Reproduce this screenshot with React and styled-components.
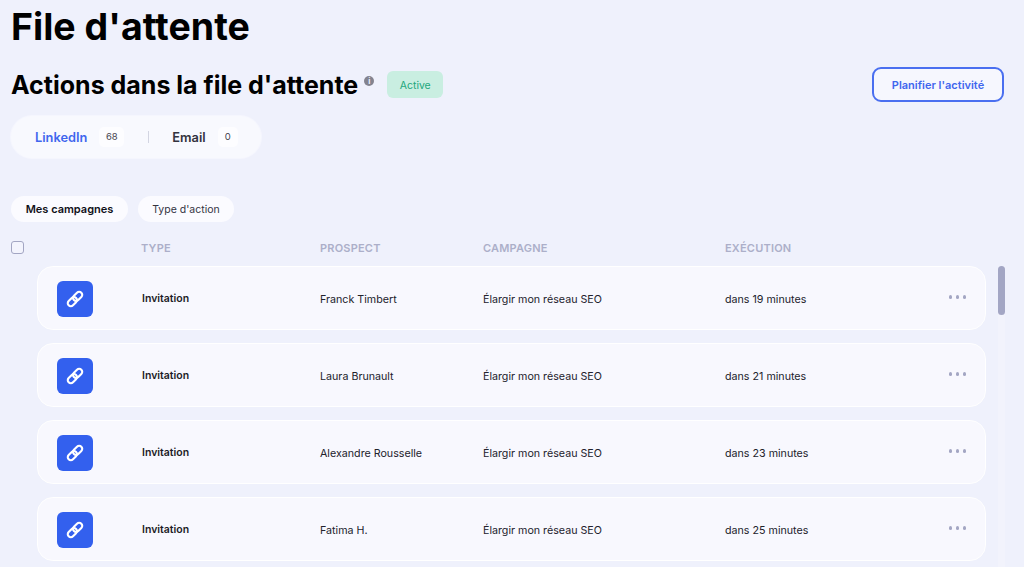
import React from "react";
import styled, { createGlobalStyle } from "styled-components";

const Global = createGlobalStyle`
  html, body { margin: 0; padding: 0; height: 100%; overflow: hidden; background: #eff1fc; }
  body { font-family: Inter, "Liberation Sans", sans-serif; color: #17171f; }
  * { box-sizing: border-box; }
`;

const Page = styled.div`
  width: 1024px;
  height: 567px;
  overflow: hidden;
  padding: 0 20px 0 11px;
  display: flex;
  flex-direction: column;
  & > * { flex: none; }
`;
const Title = styled.h1`
  margin: 0;
  height: 54px;
  font-size: 37.5px;
  line-height: 54px;
  font-weight: 700;
  color: #000;
`;
const HeadRow = styled.div`
  display: flex;
  align-items: flex-start;
  height: 61px;
  padding-top: 13px;
`;
const Heading = styled.h2`
  margin: 0;
  font-size: 25px;
  line-height: 36px;
  font-weight: 700;
  color: #000;
`;
const InfoDot = styled.span`
  width: 10px;
  height: 10px;
  margin: 9px 0 0 6px;
  border-radius: 50%;
  background: #83838f;
  color: #eff1fc;
  font-size: 8px;
  line-height: 10px;
  font-weight: 700;
  text-align: center;
`;
const Badge = styled.span`
  width: 56px;
  height: 27px;
  margin: 4px 0 0 13px;
  padding-top: 1px;
  border-radius: 6px;
  background: #c9eee1;
  color: #22a77c;
  font-size: 10.5px;
  line-height: 27px;
  text-align: center;
`;
const PlanButton = styled.button`
  width: 132px;
  height: 35px;
  margin-left: auto;
  padding: 0;
  border: 2px solid #4a6ff0;
  border-radius: 9px;
  background: #f6f7fe;
  color: #3f66ee;
  font-family: inherit;
  font-size: 11px;
  font-weight: 600;
`;
const Tabs = styled.div`
  width: 250px;
  height: 42px;
  margin-top: 1px;
  padding-left: 24px;
  display: flex;
  align-items: center;
  border-radius: 21px;
  background: #f8f9fe;
  box-shadow: 0 0 0 1px #f5f6fe;
`;
const TabLabel = styled.span`
  font-size: 12.8px;
  font-weight: 600;
  color: ${(p) => (p.$active ? "#3f66ee" : "#33333f")};
`;
const Count = styled.span`
  min-width: ${(p) => p.$w}px;
  height: 20px;
  margin-left: 12px;
  border-radius: 5px;
  background: #fdfdff;
  color: #44444f;
  font-size: 9.5px;
  line-height: 20px;
  text-align: center;
`;
const TabSep = styled.span`
  width: 1px;
  height: 12px;
  margin: 0 23px 0 24px;
  background: #d3d5e2;
`;
const Filters = styled.div`
  display: flex;
  gap: 10px;
  margin-top: 38px;
`;
const Filter = styled.button`
  width: ${(p) => p.$w}px;
  height: 26px;
  padding: 0;
  border: 0;
  border-radius: 13px;
  background: #fbfbff;
  color: ${(p) => (p.$strong ? "#101018" : "#33333f")};
  font-family: inherit;
  font-size: ${(p) => (p.$strong ? 11 : 10.5)}px;
  font-weight: ${(p) => (p.$strong ? 600 : 400)};
`;
const HeaderRow = styled.div`
  display: grid;
  grid-template-columns: 130px 179px 163px 242px 1fr;
  align-items: center;
  height: 44px;
  padding-top: 7px;
`;
const Check = styled.span`
  width: 13px;
  height: 13px;
  border: 1.5px solid #a3a6c3;
  border-radius: 3px;
  background: #f3f4fd;
`;
const ColHead = styled.span`
  font-size: 11px;
  font-weight: 600;
  color: #acafc9;
  letter-spacing: 0.2px;
`;
const Body = styled.div`
  display: flex;
  margin-left: 26px;
`;
const List = styled.div`
  flex: none;
  width: 949px;
  display: flex;
  flex-direction: column;
  gap: 13px;
`;
const Row = styled.div`
  height: 64px;
  padding: 2px 19px 0;
  display: grid;
  grid-template-columns: 85px 178px 163px 242px 1fr auto;
  align-items: center;
  border: 1px solid #ffffff;
  border-radius: 16px;
  background: #f8f8fe;
`;
const IconBox = styled.div`
  width: 36px;
  height: 36px;
  margin-top: -1px;
  display: flex;
  align-items: center;
  justify-content: center;
  border-radius: 6px;
  background: #3360ee;
`;
const TypeCell = styled.span`
  font-size: 10.5px;
  font-weight: 600;
  color: #1c1c26;
  margin-top: -2px;
`;
const Cell = styled.span`
  font-size: 10.7px;
  color: #22222c;
`;
const Dots = styled.div`
  display: flex;
  gap: 3.5px;
  margin-top: -4px;
`;
const Dot = styled.span`
  width: 3.5px;
  height: 3.5px;
  border-radius: 50%;
  background: #a3a6c3;
`;
const Track = styled.div`
  flex: none;
  width: 7px;
  height: 340px;
  margin-left: 12px;
  border-radius: 4px;
  background: #f2f3fc;
`;
const Thumb = styled.div`
  height: 49px;
  border-radius: 4px;
  background: #a3a6c4;
`;

const LinkIcon = () => (
  <svg width="18" height="18" viewBox="0 0 24 24" fill="none" stroke="#fff" strokeWidth="2.8">
    <rect x="4.4" y="8.5" width="8.2" height="14" rx="4.1" transform="rotate(45 8.5 15.5)" />
    <rect x="11.4" y="1.5" width="8.2" height="14" rx="4.1" transform="rotate(45 15.5 8.5)" />
  </svg>
);

const rows = [
  ["Franck Timbert", "dans 19 minutes"],
  ["Laura Brunault", "dans 21 minutes"],
  ["Alexandre Rousselle", "dans 23 minutes"],
  ["Fatima H.", "dans 25 minutes"],
];

export default function App() {
  return (
    <>
      <Global />
      <Page>
        <Title>File d'attente</Title>
        <HeadRow>
          <Heading>Actions dans la file d'attente</Heading>
          <InfoDot>i</InfoDot>
          <Badge>Active</Badge>
          <PlanButton>Planifier l'activité</PlanButton>
        </HeadRow>
        <Tabs>
          <TabLabel $active>LinkedIn</TabLabel>
          <Count $w={25}>68</Count>
          <TabSep />
          <TabLabel>Email</TabLabel>
          <Count $w={20}>0</Count>
        </Tabs>
        <Filters>
          <Filter $w={117} $strong>Mes campagnes</Filter>
          <Filter $w={96}>Type d'action</Filter>
        </Filters>
        <HeaderRow>
          <Check />
          <ColHead>TYPE</ColHead>
          <ColHead>PROSPECT</ColHead>
          <ColHead>CAMPAGNE</ColHead>
          <ColHead>EXÉCUTION</ColHead>
        </HeaderRow>
        <Body>
          <List>
            {rows.map(([name, when]) => (
              <Row key={name}>
                <IconBox><LinkIcon /></IconBox>
                <TypeCell>Invitation</TypeCell>
                <Cell>{name}</Cell>
                <Cell>Élargir mon réseau SEO</Cell>
                <Cell>{when}</Cell>
                <Dots><Dot /><Dot /><Dot /></Dots>
              </Row>
            ))}
          </List>
          <Track><Thumb /></Track>
        </Body>
      </Page>
    </>
  );
}
